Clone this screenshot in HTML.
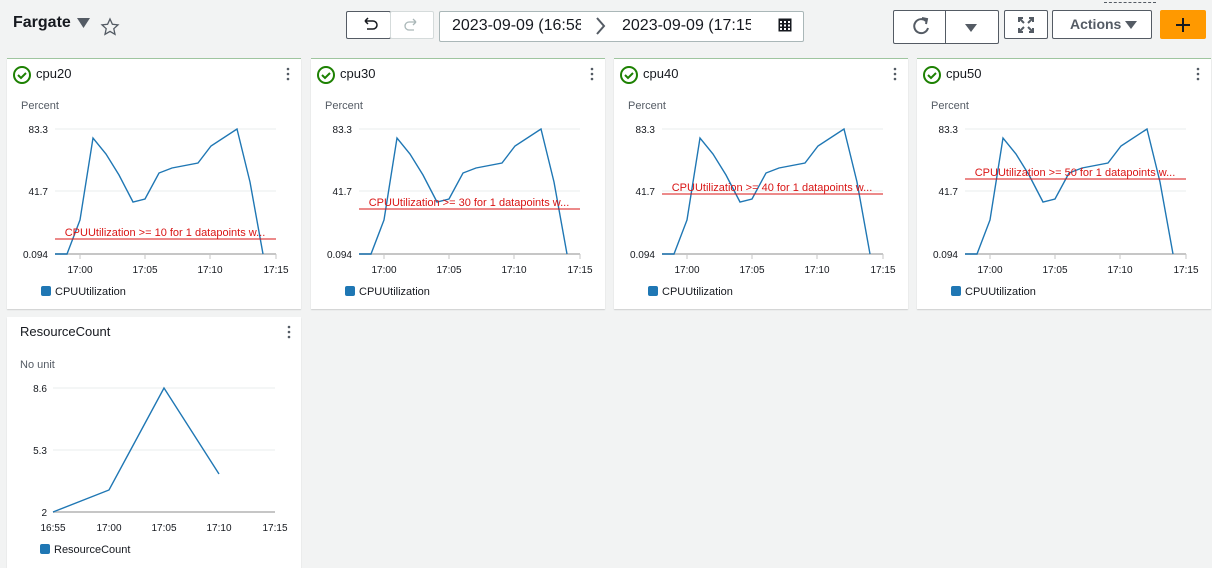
<!DOCTYPE html>
<html><head><style>
body{margin:0;width:1212px;height:568px;background:#f2f3f3;font-family:"Liberation Sans",sans-serif;position:relative;overflow:hidden;color:#16191f}
.a{position:absolute}
.btn{position:absolute;border:1px solid #545b64;background:#fff;box-sizing:border-box;border-radius:2px}
.panel{position:absolute;background:#fff;width:294px;box-shadow:0 1px 1px rgba(0,0,0,.15)}
</style></head><body>
<div class="a" style="left:13px;top:14px;font-size:16px;font-weight:bold">Fargate</div>
<svg class="a" style="left:76px;top:16px" width="45" height="22"><path d="M1 2h13l-6.5 10z" fill="#545b64"/><path d="M34 3l2.4 5.3 5.6.6-4.2 3.8 1.2 5.6-5-2.9-5 2.9 1.2-5.6-4.2-3.8 5.6-.6z" fill="none" stroke="#545b64" stroke-width="1.3"/></svg>
<div class="btn" style="left:346px;top:11px;width:45px;height:28px"></div>
<div class="btn" style="left:390px;top:11px;width:44px;height:28px;border-color:#d5dbdb"></div>
<svg class="a" style="left:346px;top:11px" width="90" height="28"><path d="M19 10h8a4 4 0 010 8h-6M19 10l3-3M19 10l3 3" fill="none" stroke="#16191f" stroke-width="1.5"/><path d="M70 11h-7a4 4 0 000 8h5M70 11l-3-3M70 11l-3 3" fill="none" stroke="#aab7b8" stroke-width="1.3"/></svg>
<div class="btn" style="left:439px;top:11px;width:365px;height:31px;border-color:#aab7b8"></div>
<div class="a" style="left:452px;top:17px;font-size:16px;width:129px;overflow:hidden;white-space:nowrap">2023-09-09 (16:58</div>
<svg class="a" style="left:594px;top:16px" width="14" height="20"><path d="M3 2l7 8-7 8" fill="none" stroke="#545b64" stroke-width="2"/></svg>
<div class="a" style="left:622px;top:17px;font-size:16px;width:129px;overflow:hidden;white-space:nowrap">2023-09-09 (17:15</div>
<svg class="a" style="left:778px;top:18px" width="15" height="15"><rect x="0.5" y="0.5" width="13" height="13" fill="#16191f"/><g fill="#fff"><rect x="2" y="3" width="2" height="2"/><rect x="6" y="3" width="2" height="2"/><rect x="10" y="3" width="2" height="2"/><rect x="2" y="6.5" width="2" height="2"/><rect x="6" y="6.5" width="2" height="2"/><rect x="10" y="6.5" width="2" height="2"/><rect x="2" y="10" width="2" height="2"/><rect x="6" y="10" width="2" height="2"/><rect x="10" y="10" width="2" height="2"/></g></svg>
<div class="btn" style="left:893px;top:10px;width:106px;height:34px"></div>
<div class="a" style="left:945px;top:11px;width:1px;height:32px;background:#545b64"></div>
<svg class="a" style="left:893px;top:10px" width="106" height="34"><path d="M33 11a7 7 0 10 2 7" fill="none" stroke="#545b64" stroke-width="2"/><path d="M29 8l5 1-1 5" fill="none" stroke="#545b64" stroke-width="2"/><path d="M72 14h12l-6 8z" fill="#545b64"/></svg>
<div class="btn" style="left:1004px;top:10px;width:44px;height:29px"></div>
<svg class="a" style="left:1018px;top:17px" width="16" height="16"><g stroke="#545b64" stroke-width="2" fill="none"><path d="M1 1l5 5M15 1l-5 5M1 15l5-5M15 15l-5-5"/><path d="M1 5V1h4M11 1h4v4M1 11v4h4M15 11v4h-4"/></g></svg>
<div class="btn" style="left:1052px;top:10px;width:100px;height:29px"></div>
<div class="a" style="left:1070px;top:16px;font-size:14px;font-weight:bold;color:#545b64">Actions</div>
<svg class="a" style="left:1124px;top:20px" width="14" height="10"><path d="M1 1h12l-6 8z" fill="#545b64"/></svg>
<div class="a" style="left:1104px;top:2px;width:52px;border-top:1px dashed #545b64"></div>
<div class="a" style="left:1160px;top:10px;width:46px;height:29px;background:#ff9900;border-radius:2px"></div>
<svg class="a" style="left:1174px;top:16px" width="18" height="18"><path d="M9 2v14M2 9h14" stroke="#16191f" stroke-width="2"/></svg>

<div class="panel" style="left:7px;top:58px;height:250px;border-top:1px solid #9fc59f"></div>
<div class="panel" style="left:311px;top:58px;height:250px;border-top:1px solid #9fc59f"></div>
<div class="panel" style="left:614px;top:58px;height:250px;border-top:1px solid #9fc59f"></div>
<div class="panel" style="left:917px;top:58px;height:250px;border-top:1px solid #9fc59f"></div>
<div class="panel" style="left:7px;top:317px;height:251px"></div>

<svg class="a" style="left:0;top:0" width="1212" height="568" font-family="Liberation Sans, sans-serif">
<defs>
<g id="p">
<circle cx="22" cy="75" r="8" fill="none" stroke="#1d8102" stroke-width="2"/>
<path d="M18 75l3 3 5-5" fill="none" stroke="#1d8102" stroke-width="2"/>
<g fill="#545b64"><circle cx="288" cy="69" r="1.3"/><circle cx="288" cy="74" r="1.3"/><circle cx="288" cy="79" r="1.3"/></g>
<text x="21" y="109" font-size="11" fill="#545b64">Percent</text>
<g stroke="#eaeded"><line x1="55" y1="129" x2="276" y2="129"/><line x1="55" y1="191" x2="276" y2="191"/></g>
<line x1="55" y1="254" x2="276" y2="254" stroke="#c6c6c6" stroke-width="2"/>
<g stroke="#c6c6c6"><line x1="80" y1="254" x2="80" y2="259"/><line x1="145" y1="254" x2="145" y2="259"/><line x1="210" y1="254" x2="210" y2="259"/><line x1="276" y1="254" x2="276" y2="259"/></g>
<g font-size="10" fill="#16191f" text-anchor="end"><text x="48" y="133">83.3</text><text x="48" y="195">41.7</text><text x="48" y="258">0.094</text></g>
<g font-size="10" fill="#16191f" text-anchor="middle"><text x="80" y="273">17:00</text><text x="145" y="273">17:05</text><text x="210" y="273">17:10</text><text x="276" y="273">17:15</text></g>
<path d="M55 254L67 254L80 220L93 138L106 154L119 175L133 202L145 199L159 173L172 168L198 163L211 146L237 129L250 182L263 254" fill="none" stroke="#1f77b4" stroke-width="1.4"/>
<rect x="41" y="286" width="10" height="10" rx="2" fill="#1f77b4"/>
<text x="55" y="295" font-size="11" fill="#16191f">CPUUtilization</text>
</g>
</defs>
<use href="#p"/>
<use href="#p" transform="translate(304,0)"/>
<use href="#p" transform="translate(607,0)"/>
<use href="#p" transform="translate(910,0)"/>
<g font-size="13" fill="#16191f"><text x="36" y="78">cpu20</text><text x="340" y="78">cpu30</text><text x="643" y="78">cpu40</text><text x="946" y="78">cpu50</text></g>
<g stroke="#d91515" stroke-width="1"><line x1="55" y1="239" x2="276" y2="239"/><line x1="359" y1="209" x2="580" y2="209"/><line x1="662" y1="194" x2="883" y2="194"/><line x1="965" y1="179" x2="1186" y2="179"/></g>
<g font-size="11" fill="#d91515" text-anchor="middle"><text x="165" y="236">CPUUtilization &gt;= 10 for 1 datapoints w...</text><text x="469" y="206">CPUUtilization &gt;= 30 for 1 datapoints w...</text><text x="772" y="191">CPUUtilization &gt;= 40 for 1 datapoints w...</text><text x="1075" y="176">CPUUtilization &gt;= 50 for 1 datapoints w...</text></g>

<text x="20" y="336" font-size="13" fill="#16191f">ResourceCount</text>
<g fill="#545b64"><circle cx="289" cy="327" r="1.3"/><circle cx="289" cy="332" r="1.3"/><circle cx="289" cy="337" r="1.3"/></g>
<text x="20" y="368" font-size="11" fill="#545b64">No unit</text>
<g stroke="#eaeded"><line x1="53" y1="388" x2="275" y2="388"/><line x1="53" y1="450" x2="275" y2="450"/></g>
<line x1="53" y1="512" x2="275" y2="512" stroke="#c6c6c6" stroke-width="2"/>
<g font-size="10" fill="#16191f" text-anchor="end"><text x="47" y="392">8.6</text><text x="47" y="454">5.3</text><text x="47" y="516">2</text></g>
<g font-size="10" fill="#16191f" text-anchor="middle"><text x="53" y="531">16:55</text><text x="109" y="531">17:00</text><text x="164" y="531">17:05</text><text x="219" y="531">17:10</text><text x="275" y="531">17:15</text></g>
<path d="M53 512L109 490L164 388L219 474" fill="none" stroke="#1f77b4" stroke-width="1.4"/>
<rect x="40" y="544" width="10" height="10" rx="2" fill="#1f77b4"/>
<text x="54" y="553" font-size="11" fill="#16191f">ResourceCount</text>
</svg>
</body></html>
